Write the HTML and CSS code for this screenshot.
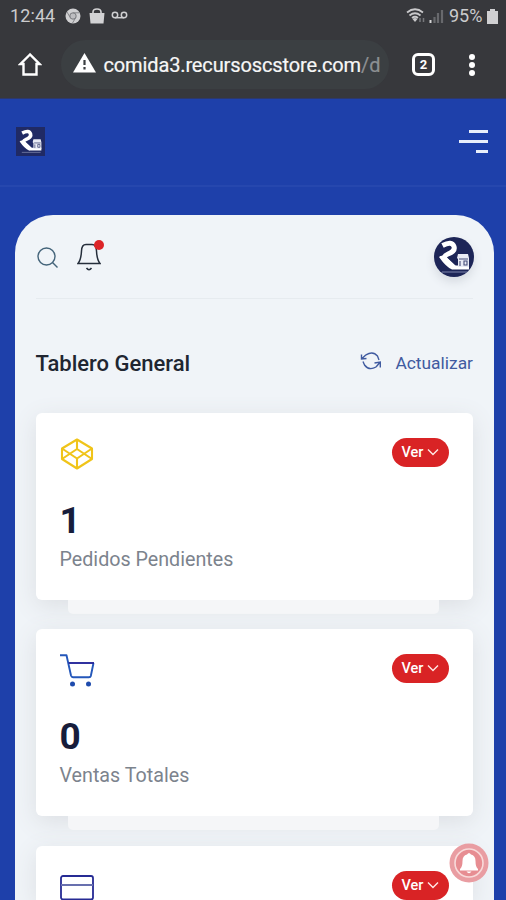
FILE: index.html
```html
<!DOCTYPE html>
<html lang="es">
<head>
<meta charset="utf-8">
<title>Tablero General</title>
<link rel="stylesheet" href="styles.css">
</head>
<body>
<svg class="defs" width="0" height="0">
  <symbol id="brand" viewBox="0 0 40 40">
    <path d="M8.500 8.500 Q18 3.500 20 9.500 Q21.500 14 14 17 Q8 19.500 12 23 L20 30.500" fill="none" stroke="#fff" stroke-width="5"/>
    <path d="M5 20 Q8 17 13 21 L21 28.500 H35 V32.500 H18 Q12 30 5 20Z" fill="#fff"/>
    <path d="M24 17 H34 L35 21 V30 H24 V22 L23 21Z" fill="#e9ebf4"/>
    <path d="M25 22 H34 M26 24 V29 M30 24 V28 H33 V24Z" fill="none" stroke="#454c78" stroke-width="1.100"/>
    <path d="M8 35 H34" stroke="#7f86ad" stroke-width="1"/>
  </symbol>
</svg>
<div class="status">
  <span class="clock">12:44</span>
  <svg class="st-left" width="42" height="18" viewBox="0 0 42 18">
    <circle cx="8" cy="9" r="7.500" fill="#cfcfd1"/>
    <circle cx="8" cy="9" r="3.200" fill="#bdbdc0" stroke="#77787c" stroke-width="1"/>
    <path d="M8 5.800 H14.500 M5.200 10.500 L2 5 M10.800 10.500 L7.500 16" stroke="#85868a" stroke-width="1"/>
    <path d="M24.500 6 H39.500 L38.500 16.500 H25.500Z" fill="#d2d2d4"/>
    <path d="M28 7 V5 Q28 2 32 2 Q36 2 36 5 V7" fill="none" stroke="#d2d2d4" stroke-width="1.600"/>
  </svg>
  <svg class="voicemail" width="17" height="8" viewBox="0 0 17 8"><g fill="none" stroke="#cfcfd1" stroke-width="1.500"><circle cx="4" cy="4" r="2.700"/><circle cx="13" cy="4" r="2.700"/><path d="M4 6.700H13"/></g></svg>
  <svg class="st-right" width="39" height="18" viewBox="0 0 39 18">
    <g fill="none" stroke="#c9c9cb" stroke-width="1.700"><path d="M1 5.500 Q9 -1 17 5.500"/><path d="M3.500 8.500 Q9 4 14.500 8.500"/><path d="M6 11 Q9 8.500 12 11"/></g>
    <path d="M9 15 L6.500 12 Q9 10 11.500 12Z" fill="#c9c9cb"/>
    <path d="M14 11V15M17.500 11V15" stroke="#77787c" stroke-width="1.500"/>
    <path d="M24.500 13V16" stroke="#d5d5d6" stroke-width="2"/>
    <path d="M28.500 10V16M32 6V16M36 3V16" stroke="#68696d" stroke-width="2.200"/>
  </svg>
  <span class="percent">95%</span>
  <svg width="11" height="15" viewBox="0 0 11 15"><path d="M3 0H8V2H11V15H0V2H3Z" fill="#d0d0d2"/></svg>
</div>
<div class="toolbar">
  <svg class="home" width="24" height="25" viewBox="0 0 24 25"><path d="M12 2.500 L2.500 12 H5.500 V22.500 H18.500 V12 H21.500Z" fill="none" stroke="#fff" stroke-width="2.400"/></svg>
  <div class="address">
    <svg width="23" height="20" viewBox="0 0 23 20"><path d="M11.500 0L23 19.500H0Z" fill="#fff"/><path d="M11.500 7V12M11.500 14V16.500" stroke="#3b3f42" stroke-width="2.200"/></svg>
    <span class="url">comida3.recursoscstore.com<span class="path">/d</span></span>
  </div>
  <div class="tabs">2</div>
  <div class="dots"><i></i><i></i><i></i></div>
</div>
<header class="header">
  <svg class="logo" width="29" height="29"><use href="#brand"/></svg>
  <div class="menu"><i class="m1"></i><i class="m2"></i><i class="m3"></i></div>
</header>
<main class="panel">
  <div class="topbar">
    <svg class="search" width="22" height="22" viewBox="0 0 22 22"><g fill="none" stroke="#44647a" stroke-width="1.400"><circle cx="9.500" cy="9.500" r="8.500"/><path d="M15.500 15.500L20.500 20.500"/></g></svg>
    <div class="bell">
      <svg width="24" height="28" viewBox="0 0 24 28"><g fill="none" stroke="#252e3b" stroke-width="1.500"><path d="M1 20.500 Q4 17 4.500 8 Q4.700 1.500 9 1.500 H15 Q19.300 1.500 19.500 8 Q20 17 23 20.500Z"/><path d="M9.500 25 Q12 28.500 14.500 25"/></g></svg>
      <span class="badge"></span>
    </div>
    <div class="avatar"><svg width="40" height="40"><use href="#brand"/></svg></div>
  </div>
  <div class="heading">
    <h1>Tablero General</h1>
    <a class="refresh"><svg width="22" height="18" viewBox="0 0 22 18"><g fill="none" stroke="#405ba0" stroke-width="1.400"><path d="M6 2.800 Q13 -1.500 17.500 4 L19 8"/><path d="M16 15 Q9 19 4.500 13 L3 9.500"/><path d="M6.500 6.500L1.500 7V2.500M1.500 7L6 2.800"/><path d="M14.500 11L20.300 10V15.500M20.300 10L16 15"/></g></svg><span>Actualizar</span></a>
  </div>
  <section class="cards">
    <article class="card">
      <div class="card-top">
        <svg width="34" height="32" viewBox="0 0 34 32"><g fill="none" stroke="#f0c419" stroke-width="2.100" stroke-linejoin="round"><path d="M17 1.500L32 10.500V21L17 30.500L2 21V10.500Z"/><path d="M2 10.500L17 20.500L32 10.500M2 21L17 11L32 21M17 1.500V11M17 20.500V30.500"/></g></svg>
        <span class="pill">Ver<svg width="12" height="8" viewBox="0 0 12 8"><path d="M1 1.500L6 6.500L11 1.500"/></svg></span>
      </div>
      <div class="value">1</div>
      <div class="label">Pedidos Pendientes</div>
    </article>
    <article class="card">
      <div class="card-top">
        <svg width="36" height="34" viewBox="0 0 36 34"><g fill="none" stroke="#2457ba" stroke-width="1.900" stroke-linejoin="round"><path d="M0 1.200H6.500L11 21.500Q11.500 23.200 13 23.200H29Q30.500 23.200 30.800 22L33.500 9"/><path d="M8.600 9H34" stroke="#25269a"/></g><circle cx="12.500" cy="30" r="2.500" fill="#1e4bad"/><circle cx="28.500" cy="30" r="2.500" fill="#1e4bad"/></svg>
        <span class="pill">Ver<svg width="12" height="8" viewBox="0 0 12 8"><path d="M1 1.500L6 6.500L11 1.500"/></svg></span>
      </div>
      <div class="value">0</div>
      <div class="label">Ventas Totales</div>
    </article>
    <article class="card last">
      <div class="card-top">
        <svg class="wallet" width="34" height="26" viewBox="0 0 34 26"><rect x="1" y="1" width="32" height="23.500" rx="2" fill="none" stroke="#262b94" stroke-width="1.800"/><path d="M1 10H33" stroke="#6870ae" stroke-width="2"/></svg>
        <span class="pill">Ver<svg width="12" height="8" viewBox="0 0 12 8"><path d="M1 1.500L6 6.500L11 1.500"/></svg></span>
      </div>
    </article>
  </section>
</main>
<div class="push"><svg width="40" height="40" viewBox="0 0 40 40"><circle cx="20" cy="20" r="19.500" fill="#e99da2"/><circle cx="20" cy="20" r="14" fill="#e78d92" stroke="#f8dada" stroke-width="1.600"/><path d="M18 11.500Q20 8.500 22 11.500Q26.500 12.500 26.500 18Q26.500 24 29 26V27.500H11V26Q13.500 24 13.500 18Q13.500 12.500 18 11.500ZM17.500 28.500H22.500Q20 32 17.500 28.500Z" fill="#fff"/></svg></div>
</body>
</html>
```
FILE: styles.css
```css
* { box-sizing: border-box; }
body {
  margin: 0;
  height: 900px;
  overflow: hidden;
  background: #1e40aa;
  font-family: Roboto, "Liberation Sans", sans-serif;
}
svg { display: block; flex: none; }
.defs { position: absolute; }

.status {
  display: flex;
  align-items: center;
  height: 32px;
  padding: 0 8px 0 10px;
  background: #37383c;
  color: #cbcbcd;
  font-size: 18px;
  line-height: 32px;
}
.clock { width: 55px; letter-spacing: 0.1px; }
.voicemail { margin: -2px 0 0 4px; }
.st-right { margin-left: auto; }
.percent { width: 37px; margin: 0 1px 0 4px; font-size: 18px; }

.toolbar {
  display: flex;
  align-items: center;
  height: 67px;
  padding: 0 0 1px 18px;
  background: #37383c;
  border-bottom: 1px solid #2d386b;
}
.address {
  display: flex;
  align-items: center;
  width: 328px;
  height: 49px;
  margin-left: 19px;
  padding-left: 12px;
  border-radius: 25px;
  background: #3b3f42;
}
.address svg { margin-top: -3px; }
.url {
  margin-left: 7.5px;
  color: #f7f7f7;
  font-size: 20px;
  letter-spacing: -0.13px;
  white-space: nowrap;
  -webkit-text-stroke: 0.2px;
}
.path { color: #8c8f92; }
.tabs {
  width: 23px;
  height: 23px;
  margin-left: 23px;
  border: 3px solid #fff;
  border-radius: 6px;
  color: #fff;
  font-size: 13px;
  font-weight: 700;
  line-height: 18px;
  text-align: center;
}
.dots { display: flex; flex-direction: column; gap: 2px; margin-left: 34px; }
.dots i { width: 6px; height: 6px; border-radius: 50%; background: #fff; }

.header {
  display: flex;
  justify-content: space-between;
  height: 88px;
  padding: 28px 18px 0 16px;
  border-bottom: 2px solid #2647ae;
}
.logo { background: #202a64; }
.menu { display: flex; flex-direction: column; align-items: flex-end; gap: 7px; padding-top: 3px; }
.menu i { height: 3px; background: #e9effb; }
.m1 { width: 19px; }
.m2 { width: 29px; }
.m3 { width: 12px; }

.panel {
  height: 685px;
  margin: 28px 12px 0 15px;
  padding: 0 21px 0 20.5px;
  overflow: hidden;
  border-radius: 38px 38px 0 0;
  background: #f0f4f8;
}
.topbar {
  display: flex;
  align-items: flex-start;
  height: 84px;
  padding-top: 23px;
  border-bottom: 1px solid #e6ebef;
}
.search { margin: 9px 0 0 1px; }
.bell { position: relative; margin: 5px 0 0 18px; }
.badge { position: absolute; left: 17px; top: -3px; width: 10px; height: 10px; border-radius: 50%; background: #dc2427; }
.avatar {
  width: 40px;
  height: 40px;
  margin: -1px -1px 0 auto;
  overflow: hidden;
  border-radius: 50%;
  background: #1d2557;
  box-shadow: 0 5px 10px #d6dbe1;
}
.heading { display: flex; justify-content: space-between; height: 114px; padding-top: 50px; }
h1 { margin: 0; color: #202631; font-size: 22px; font-weight: 500; line-height: 29px; white-space: nowrap; }
.refresh { display: flex; color: #405ba0; font-size: 17.4px; line-height: 29px; }
.refresh svg { margin: 3px 13px 0 0; }

.cards { display: flex; flex-direction: column; gap: 29.4px; }
.card {
  position: relative;
  height: 187px;
  padding: 25px 24px 0 24px;
  border-radius: 6px;
  background: #fff;
  box-shadow: 0 6px 24px #dcdfe3;
}
.card::after {
  content: "";
  position: absolute;
  top: 187px;
  left: 32px;
  right: 34px;
  height: 14px;
  border-radius: 0 0 5px 5px;
  background: #f5f6f8;
}
.last { height: 54px; border-radius: 6px 6px 0 0; }
.last::after { display: none; }
.card-top { display: flex; justify-content: space-between; height: 61px; }
.last .card-top { height: 29px; }
.wallet { margin-top: 4px; }
.pill {
  display: flex;
  align-items: center;
  justify-content: center;
  gap: 4px;
  width: 57px;
  height: 29px;
  border-radius: 15px;
  background: #d92325;
  color: #fff;
  font-size: 14.5px;
  font-weight: 500;
}
.pill svg { margin-top: -1px; }
.pill path { fill: none; stroke: #ffe9e5; stroke-width: 1.4; }
.value { height: 43px; color: #171d3b; font-size: 37px; font-weight: 700; line-height: 43px; }
.label { width: max-content; color: #7c838d; font-size: 19.7px; line-height: 36px; }
.push { position: fixed; left: 449px; top: 843px; }
```
